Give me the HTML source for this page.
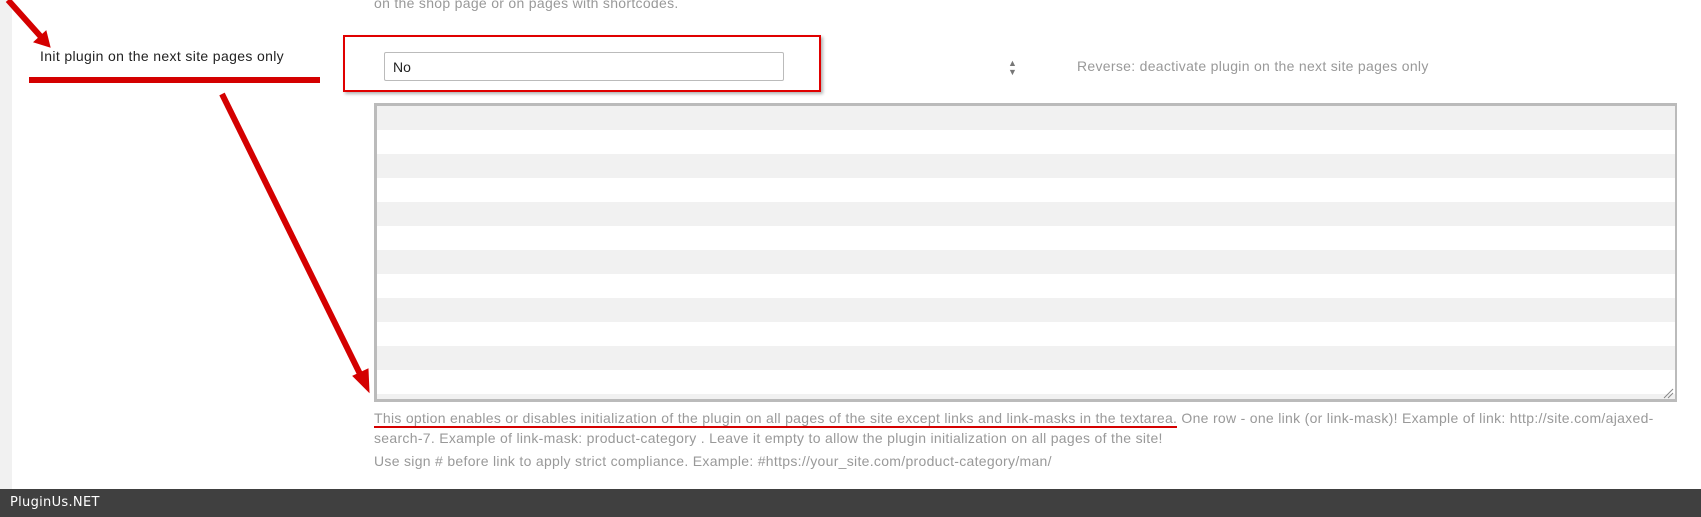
<!DOCTYPE html>
<html><head><meta charset="utf-8"><style>
*{margin:0;padding:0;box-sizing:border-box}
html,body{width:1701px;height:517px;overflow:hidden;background:#fff;font-family:"Liberation Sans",sans-serif}
.a{position:absolute}
.t{color:#999;font-size:14px;letter-spacing:0.3px;white-space:nowrap}
</style></head><body>
<div class="a" style="left:0;top:0;width:12px;height:489px;background:#f1f1f1"></div>
<div class="a t" style="left:374px;top:-5px">on the shop page or on pages with shortcodes.</div>
<div class="a" style="left:40px;top:48px;font-size:14px;letter-spacing:0.35px;color:#222">Init plugin on the next site pages only</div>
<div class="a" style="left:29px;top:77px;width:291px;height:6px;background:#d40000"></div>
<div class="a" style="left:343px;top:35px;width:478px;height:57px;border:2px solid #e00000;box-shadow:2px 2px 3px rgba(0,0,0,.3)"></div>
<div class="a" style="left:384px;top:52px;width:400px;height:29px;border:1px solid #bbb;border-radius:2px;font-size:14px;color:#222;padding:6px 0 0 8px">No</div>
<div class="a" style="left:1008px;top:59px;font-size:9px;color:#777;line-height:9px">▲<br>▼</div>
<div class="a t" style="left:1077px;top:58px">Reverse: deactivate plugin on the next site pages only</div>
<div class="a" style="left:374px;top:103px;width:1303px;height:299px;border:3px solid #bbb;border-right-width:2px;background:repeating-linear-gradient(#f1f1f1 0 24px,#fff 24px 48px)"></div>
<div class="a t" style="left:374px;top:408px;width:1300px;white-space:normal;line-height:20px">This option enables or disables initialization of the plugin on all pages of the site except links and link-masks in the textarea. One row - one link (or link-mask)! Example of link: http://site.com/ajaxed-<br>search-7. Example of link-mask: product-category . Leave it empty to allow the plugin initialization on all pages of the site!</div>
<div class="a t" style="left:374px;top:453px">Use sign # before link to apply strict compliance. Example: #https://your_site.com/product-category/man/</div>
<div class="a" style="left:374px;top:426px;width:803px;height:2px;background:#d40000"></div>
<div class="a" style="left:0;top:489px;width:1701px;height:28px;background:#404040;color:#fff;font-family:'DejaVu Sans',sans-serif;font-size:13px;letter-spacing:0.3px;padding:6px 0 0 10px">PluginUs.NET</div>
<svg class="a" style="left:0;top:0" width="1701" height="517">
<g stroke="#d40000" stroke-width="6" fill="#d40000">
<line x1="8" y1="0" x2="42" y2="38"/>
<polygon points="50,47 34,42 46,31" stroke-width="1"/>
<line x1="222" y1="94" x2="362" y2="378"/>
<polygon points="369,392 353,376 368,369" stroke-width="1"/>
</g>
<g stroke="#888" stroke-width="1"><line x1="1664" y1="398" x2="1673" y2="389"/><line x1="1668" y1="398" x2="1673" y2="393"/></g>
</svg>
</body></html>
